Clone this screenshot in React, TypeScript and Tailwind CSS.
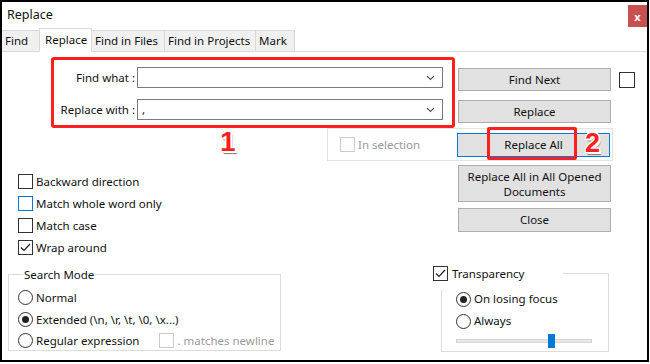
import React from "react";

function Box({ checked = false, tone = "normal" }: { checked?: boolean; tone?: "normal" | "focus" | "disabled" }) {
  const border =
    tone === "focus" ? "border-[#0078d7]" : tone === "disabled" ? "border-[#cccccc]" : "border-[#333333]";
  return (
    <span className={`flex h-[15px] w-[15px] shrink-0 items-center justify-center border bg-white ${border}`}>
      {checked && (
        <svg width="11" height="9" viewBox="0 0 11 9">
          <path d="M1 4.5 L4 7.5 L10 1" fill="none" stroke="#222" strokeWidth="1.2" />
        </svg>
      )}
    </span>
  );
}

function Radio({ checked = false }: { checked?: boolean }) {
  return (
    <span className="flex h-[15px] w-[15px] shrink-0 items-center justify-center rounded-full border border-[#333333] bg-white">
      {checked && <span className="h-[7px] w-[7px] rounded-full bg-[#222]" />}
    </span>
  );
}

function Chevron() {
  return (
    <svg width="9" height="6" viewBox="0 0 9 6" className="shrink-0">
      <path d="M1 1 L4.5 4.5 L8 1" fill="none" stroke="#555" strokeWidth="1.1" />
    </svg>
  );
}

function Btn({ children, className = "" }: { children: React.ReactNode; className?: string }) {
  return (
    <div
      className={`flex w-[153px] items-center justify-center whitespace-nowrap border bg-[#e1e1e1] text-center text-[#111] ${className}`}
    >
      {children}
    </div>
  );
}

const TABS: { t: string; w: string }[] = [
  { t: "Find", w: "w-[38px]" },
  { t: "Replace", w: "w-[53px]" },
  { t: "Find in Files", w: "w-[73px]" },
  { t: "Find in Projects", w: "w-[91px]" },
  { t: "Mark", w: "w-[39px]" },
];

export default function App() {
  return (
    <div className="relative h-[364px] w-[650px] whitespace-nowrap bg-white font-['Noto_Sans',sans-serif] text-[11.5px] text-[#111]">
      <div className="h-[362px] w-[649px] border-2 border-black">
        {/* title bar */}
        <div className="flex h-[26px] items-start justify-between">
          <span className="mt-[4px] pl-[5px] text-[12.5px]">Replace</span>
          <div className="mt-[3px] flex h-[22px] w-[19px] items-center justify-center bg-[#c75050] text-[11px] font-bold leading-none text-white">
            x
          </div>
        </div>

        {/* tabs */}
        <div className="flex h-[24px] items-end border-b border-[#d9d9d9]">
          {TABS.map(({ t, w }) =>
            t === "Replace" ? (
              <div
                key={t}
                className={`-mb-px -ml-px flex h-[24px] items-start border border-b-white border-[#d9d9d9] bg-white px-[5px] pt-[2px] ${w}`}
              >
                {t}
              </div>
            ) : (
              <div
                key={t}
                className={`flex h-[21px] items-center border border-b-0 border-l-0 border-[#d9d9d9] bg-[#f0f0f0] px-[3px] ${w}`}
              >
                {t}
              </div>
            ),
          )}
        </div>

        {/* fields + first buttons */}
        <div className="mt-[15px] flex">
          <div className="flex w-[443px] flex-col gap-[11px]">
            {[
              ["Find what :", ""],
              ["Replace with :", ","],
            ].map(([label, val]) => (
              <div key={label} className="flex items-center">
                <span className="w-[135px] pr-[2px] text-right">{label}</span>
                <div className="flex h-[21px] w-[306px] items-center justify-between border border-[#7a7a7a] bg-white pl-[4px] pr-[7px]">
                  <span>{val}</span>
                  <Chevron />
                </div>
              </div>
            ))}
          </div>
          <div className="ml-[13px] flex flex-col">
            <Btn className="mt-[1px] h-[23px] border-[#adadad]">Find Next</Btn>
            <Btn className="mt-[9px] h-[23px] border-[#adadad]">Replace</Btn>
          </div>
          <div className="ml-[8px] mt-[5px]">
            <span className="block h-[16px] w-[16px] border border-[#333]" />
          </div>
        </div>

        {/* in selection */}
        <div className="ml-[325px] mt-[5px] flex h-[33px] w-[286px] items-center border border-[#e3e3e3]">
          <div className="flex w-[129px] items-center gap-[3px] pl-[12px] text-[#9a9a9a]">
            <Box tone="disabled" />
            <span>In selection</span>
          </div>
          <Btn className="h-[24px] border-[#0078d7]">Replace All</Btn>
        </div>

        {/* options + buttons */}
        <div className="mt-[4px] flex">
          <div className="flex w-[456px] flex-col pl-[16px] pt-[9px]">
            {[
              { t: "Backward direction", c: false, tone: "normal" as const },
              { t: "Match whole word only", c: false, tone: "focus" as const },
              { t: "Match case", c: false, tone: "normal" as const },
              { t: "Wrap around", c: true, tone: "normal" as const },
            ].map((o) => (
              <div key={o.t} className="flex h-[22px] items-start gap-[3px]">
                <Box checked={o.c} tone={o.tone} />
                <span className="-mt-[1px]">{o.t}</span>
              </div>
            ))}
          </div>
          <div className="flex flex-col">
            <Btn className="h-[37px] border-[#adadad] leading-[15px]">
              Replace All in All Opened
              <br />
              Documents
            </Btn>
            <Btn className="mt-[6px] h-[24px] border-[#adadad]">Close</Btn>
          </div>
        </div>

        {/* bottom groups */}
        <div className="mt-[4px] flex items-start">
          <fieldset className="ml-[6px] h-[85px] w-[273px] border border-[#dcdcdc] pl-[9px]">
            <legend className="ml-[5px] px-[1px]">Search Mode</legend>
            <div className="mt-[3px] flex h-[22px] items-center gap-[3px]">
              <Radio />
              <span>Normal</span>
            </div>
            <div className="flex h-[22px] items-center gap-[3px]">
              <Radio checked />
              <span>Extended (\n, \r, \t, \0, \x...)</span>
            </div>
            <div className="flex h-[21px] items-center gap-[3px]">
              <Radio />
              <span>Regular expression</span>
              <span className="ml-[17px] flex items-center gap-[3px] text-[#9a9a9a]">
                <Box tone="disabled" />
                <span>. matches newline</span>
              </span>
            </div>
          </fieldset>

          <div className="ml-[160px] mt-[7px] h-[79px] w-[168px] border border-[#dcdcdc]">
            <div className="-ml-[9px] -mt-[8px] flex h-[24px] w-[130px] items-start gap-[4px] bg-white">
              <Box checked />
              <span className="-mt-[1px]">Transparency</span>
            </div>
            <div className="-mt-[2px] ml-[14px] flex flex-col">
              <div className="flex h-[22px] items-center gap-[3px]">
                <Radio checked />
                <span>On losing focus</span>
              </div>
              <div className="flex h-[22px] items-center gap-[3px]">
                <Radio />
                <span>Always</span>
              </div>
              <div className="relative mt-[7px] h-[4px] w-[136px] border border-[#d6d6d6] bg-[#e7e7e7]">
                <span className="absolute -top-[6px] left-[91px] h-[14px] w-[7px] bg-[#0078d7]" />
              </div>
            </div>
          </div>
        </div>
      </div>

      {/* annotations */}
      <div className="absolute left-[51px] top-[57px] h-[71px] w-[404px] rounded-[3px] border-[3px] border-[#ff1f1f]" />
      <div className="absolute left-[487px] top-[127px] h-[33px] w-[90px] rounded-[2px] border-[3px] border-[#ff1f1f]" />
      <span className="absolute left-[220px] top-[128px] font-['Liberation_Sans',sans-serif] text-[28px] font-bold leading-none text-[#ff1f1f] [text-shadow:-1px_-1px_0_#fff,1px_-1px_0_#fff,-1px_1px_0_#fff,2px_2px_0_#fff,2px_3px_1px_#777]">
        1
      </span>
      <span className="absolute left-[585px] top-[130px] font-['Liberation_Sans',sans-serif] text-[27px] font-bold leading-none text-[#ff1f1f] [text-shadow:-1px_-1px_0_#fff,1px_-1px_0_#fff,-1px_1px_0_#fff,2px_2px_0_#fff,2px_3px_1px_#777]">
        2
      </span>
    </div>
  );
}
